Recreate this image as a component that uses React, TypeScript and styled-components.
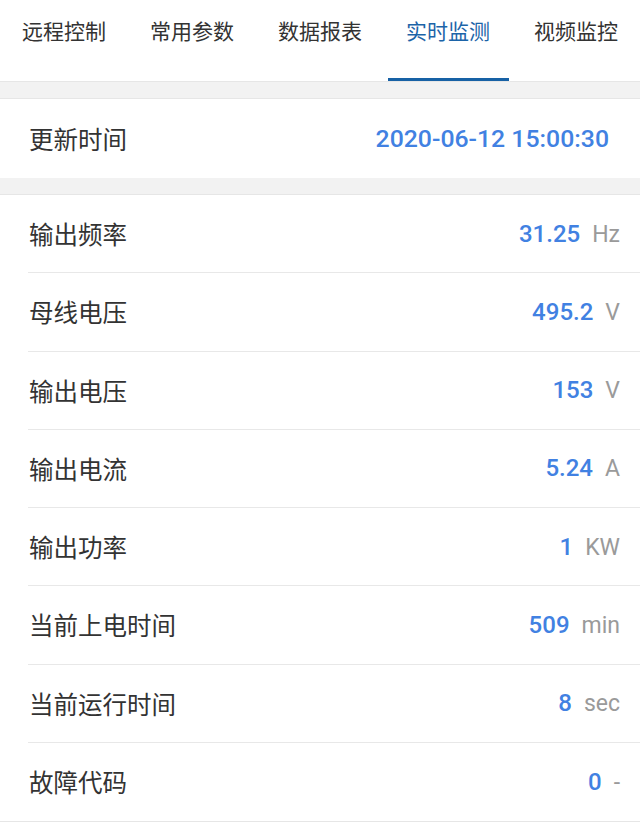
import React from 'react';
import styled, { createGlobalStyle } from 'styled-components';

const GlobalStyle = createGlobalStyle`
  html, body {
    margin: 0;
    padding: 0;
    background: #ffffff;
  }
  body {
    font-family: Roboto, "Noto Sans CJK SC", sans-serif;
    -webkit-font-smoothing: antialiased;
  }
`;

const Page = styled.div`
  width: 640px;
  background: #ffffff;
`;

const TabBar = styled.div`
  display: flex;
  height: 82px;
  box-sizing: border-box;
  border-bottom: 1px solid #e6e6e6;
  background: #ffffff;
`;

const Tab = styled.div<{ active?: boolean }>`
  flex: 1;
  display: flex;
  flex-direction: column;
  align-items: center;
  justify-content: space-between;
  padding-top: 19px;
  font-size: 21px;
  line-height: 26px;
  color: ${(props) => (props.active ? '#1c64a8' : '#333333')};
`;

const Indicator = styled.div<{ active?: boolean }>`
  width: 121px;
  height: 3px;
  background: ${(props) => (props.active ? '#1761a5' : 'transparent')};
`;

const Spacer = styled.div`
  height: 17px;
  box-sizing: border-box;
  background: #f2f2f2;
  border-bottom: 1px solid #e6e6e6;
`;

const Section = styled.div<{ bordered?: boolean }>`
  background: #ffffff;
  border-bottom: ${(props) => (props.bordered ? '1px solid #e6e6e6' : 'none')};
`;

const Row = styled.div`
  padding-left: 28px;
`;

const RowInner = styled.div<{ last?: boolean; wide?: boolean }>`
  display: flex;
  align-items: center;
  justify-content: space-between;
  height: ${(props) => (props.wide ? '79px' : '78.25px')};
  box-sizing: border-box;
  padding-left: 1px;
  padding-right: ${(props) => (props.wide ? '31px' : '20px')};
  border-bottom: ${(props) => (props.last ? 'none' : '1px solid #e8e8e8')};
`;

const Label = styled.span`
  font-size: 24.5px;
  color: #333333;
`;

const ValueGroup = styled.span`
  display: flex;
  align-items: baseline;
  gap: 12px;
`;

const Value = styled.span<{ large?: boolean }>`
  font-size: ${(props) => (props.large ? '24.8px' : '24px')};
  font-weight: 500;
  color: #4181e2;
`;

const Unit = styled.span`
  font-size: 23px;
  color: #9a9a9a;
`;

const tabs = ['远程控制', '常用参数', '数据报表', '实时监测', '视频监控'];

const readings = [
  { label: '输出频率', value: '31.25', unit: 'Hz' },
  { label: '母线电压', value: '495.2', unit: 'V' },
  { label: '输出电压', value: '153', unit: 'V' },
  { label: '输出电流', value: '5.24', unit: 'A' },
  { label: '输出功率', value: '1', unit: 'KW' },
  { label: '当前上电时间', value: '509', unit: 'min' },
  { label: '当前运行时间', value: '8', unit: 'sec' },
  { label: '故障代码', value: '0', unit: '-' }
];

const App: React.FC = () => {
  return (
    <Page>
      <GlobalStyle />
      <TabBar>
        {tabs.map((tab) => (
          <Tab key={tab} active={tab === '实时监测'}>
            <span>{tab}</span>
            <Indicator active={tab === '实时监测'} />
          </Tab>
        ))}
      </TabBar>
      <Spacer />
      <Section>
        <Row>
          <RowInner last wide>
            <Label>更新时间</Label>
            <Value large>2020-06-12 15:00:30</Value>
          </RowInner>
        </Row>
      </Section>
      <Spacer />
      <Section bordered>
        {readings.map((item, index) => (
          <Row key={item.label}>
            <RowInner last={index === readings.length - 1}>
              <Label>{item.label}</Label>
              <ValueGroup>
                <Value>{item.value}</Value>
                <Unit>{item.unit}</Unit>
              </ValueGroup>
            </RowInner>
          </Row>
        ))}
      </Section>
    </Page>
  );
};

export default App;
